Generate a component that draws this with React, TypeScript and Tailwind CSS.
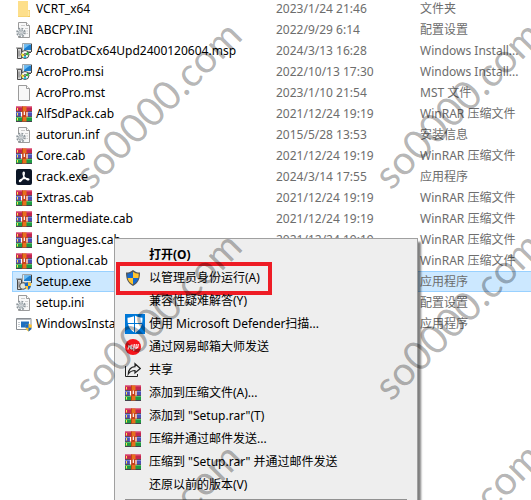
import type { ReactNode } from "react";

type IconKind = "folder" | "gear" | "msi" | "page" | "rar" | "acrobat" | "setup" | "installer";

type FileRow = { icon: IconKind; name: string; date: string; type: string; selected?: boolean };

const files: FileRow[] = [
  { icon: "folder", name: "VCRT_x64", date: "2023/1/24 21:46", type: "文件夹" },
  { icon: "gear", name: "ABCPY.INI", date: "2022/9/29 6:14", type: "配置设置" },
  { icon: "msi", name: "AcrobatDCx64Upd2400120604.msp", date: "2024/3/13 16:28", type: "Windows Install..." },
  { icon: "msi", name: "AcroPro.msi", date: "2022/10/13 17:30", type: "Windows Install..." },
  { icon: "page", name: "AcroPro.mst", date: "2023/1/10 21:54", type: "MST 文件" },
  { icon: "rar", name: "AlfSdPack.cab", date: "2021/12/24 19:19", type: "WinRAR 压缩文件" },
  { icon: "gear", name: "autorun.inf", date: "2015/5/28 13:53", type: "安装信息" },
  { icon: "rar", name: "Core.cab", date: "2021/12/24 19:19", type: "WinRAR 压缩文件" },
  { icon: "acrobat", name: "crack.exe", date: "2024/3/14 17:55", type: "应用程序" },
  { icon: "rar", name: "Extras.cab", date: "2021/12/24 19:19", type: "WinRAR 压缩文件" },
  { icon: "rar", name: "Intermediate.cab", date: "2021/12/24 19:19", type: "WinRAR 压缩文件" },
  { icon: "rar", name: "Languages.cab", date: "2021/12/24 19:19", type: "WinRAR 压缩文件" },
  { icon: "rar", name: "Optional.cab", date: "2021/12/24 19:19", type: "WinRAR 压缩文件" },
  { icon: "setup", name: "Setup.exe", date: "", type: "应用程序", selected: true },
  { icon: "gear", name: "setup.ini", date: "", type: "配置设置" },
  { icon: "installer", name: "WindowsInsta", date: "", type: "应用程序" },
];

function RarIcon() {
  return (
    <svg viewBox="0 0 16 16" className="size-4 shrink-0" aria-hidden="true">
      <path d="M0 .5h16v4.500H0z" fill="#c4264f" />
      <path d="M0 .5h16v1H0z" fill="#e2587e" />
      <path d="M0 6h16v4H0z" fill="#4b50b4" />
      <path d="M0 6h16v1H0z" fill="#7b80d8" />
      <path d="M0 11h16v4.500H0z" fill="#1f9a42" />
      <path d="M0 11h16v1H0z" fill="#4fc070" />
      <path d="M0 5.500h16M0 10.500h16M0 15.500h16" stroke="#33223a" strokeWidth=".8" />
      <path d="M1.500 2v2.500M1.500 7v2.500M1.500 12v2.500" stroke="#ffe14d" />
      <path d="M6 .5h4.500v15H6z" fill="#e8701c" />
      <path d="M6 .5h1v15H6z" fill="#b84a14" />
      <path d="M5 5h7v6H5z" fill="#c6431c" />
      <path d="M5.500 10.500V6M11 10.500V6M8.300 5.500v3.500" stroke="#fff" strokeWidth="1.200" />
    </svg>
  );
}

function AdminShieldIcon() {
  return (
    <svg viewBox="0 0 16 16" className="size-4 shrink-0" aria-hidden="true">
      <path d="M8 0C6 1.700 4 2.500 1 2.600 1 9 2.500 13 8 16c5.500-3 7-7 7-13.400C12 2.500 10 1.700 8 0Z" fill="#555" />
      <path d="M8 1.800C6.500 3 4.800 3.600 2.300 3.800c0 1.600.1 2.900.3 4.200H8Z" fill="#1468cc" />
      <path d="M8 1.800c1.500 1.200 3.200 1.800 5.700 2 0 1.600-.1 2.900-.3 4.200H8Z" fill="#ffc42e" />
      <path d="M2.600 8c.6 3 2.200 4.900 5.400 6.600V8Z" fill="#ffc42e" />
      <path d="M13.400 8c-.6 3-2.200 4.900-5.400 6.600V8Z" fill="#1468cc" />
    </svg>
  );
}

function PageShape() {
  return (
    <>
      <path d="M2.500.5h8l3 3v12h-11z" fill="#f8f8f8" stroke="#9b9b9b" />
      <path d="M10.500.5v3h3" fill="#fff" stroke="#9b9b9b" />
    </>
  );
}

function ComputerShape() {
  return (
    <>
      <path d="M1.500 5.500h4v10h-4z" fill="#d6d6d6" stroke="#4a4a4a" />
      <path d="M0 5h6" stroke="#777" />
      <path d="M3 7.500v6" stroke="#777" />
      <path d="M6.500.5h9v8h-9z" fill="#e4e8ea" stroke="#9aa4aa" />
      <path d="M8 1.500h7v5.500H8z" fill="#1d7fd0" />
      <path d="M8 1.500h6L8 6z" fill="#6cbcf2" />
      <path d="M15.500 1v8M7 9.500h8" stroke="#444" />
    </>
  );
}

function FileIcon({ kind }: { kind: IconKind }) {
  if (kind === "rar") return <RarIcon />;
  return (
    <svg viewBox="0 0 16 16" className="size-4 shrink-0" aria-hidden="true">
      {kind === "folder" && (
        <>
          <path d="M2 0h9.500v9H14v7H2z" fill="#f0c95d" />
          <path d="M2 0h10v15.500H2z" fill="#fddf8b" />
          <path d="M12 9.500h1.500V15H12z" fill="#ffe9a8" />
        </>
      )}
      {kind === "page" && <PageShape />}
      {kind === "gear" && (
        <>
          <PageShape />
          <path d="M5 3.500h4M9 6.500h3M10.500 9h1.500M10.500 11.500h1.500" stroke="#cdcdcd" />
          <circle cx="5" cy="10.500" r="4" fill="#fff" stroke="#8b949a" strokeWidth="1.600" strokeDasharray="1.800 1.340" />
          <circle cx="5" cy="10.500" r="2.600" fill="#dde2e4" stroke="#9ba4aa" />
          <circle cx="5" cy="10.500" r="1" fill="#fff" stroke="#8b949a" strokeWidth=".6" />
        </>
      )}
      {kind === "msi" && (
        <>
          <ComputerShape />
          <circle cx="9" cy="11.500" r="4" fill="#f4f6f4" stroke="#3a3a3a" strokeWidth=".9" />
          <path d="m9 11.500 2.600-2.800a3.600 3.600 0 0 1 1 3.800z" fill="#37c13c" />
          <path d="m9 11.500-3.400-1.300a3.600 3.600 0 0 0 .9 3.800z" fill="#f3e21f" />
          <path d="m9 11.500 1.600 3.300a3.600 3.600 0 0 1-3.200 0z" fill="#25b6cf" />
          <circle cx="9" cy="11.500" r="1" fill="#fff" stroke="#222" strokeWidth=".8" />
        </>
      )}
      {kind === "setup" && (
        <>
          <ComputerShape />
          <circle cx="7" cy="12" r="3.300" fill="#dfe6df" stroke="#444" strokeWidth=".9" />
          <path d="M12 8c-1 .8-2 1.100-3.300 1.200 0 3 .8 5.200 3.300 6.600 2.500-1.400 3.300-3.600 3.300-6.600C14 9.100 13 8.800 12 8z" fill="#ffc42e" />
          <path d="M12 8c-1 .8-2 1.100-3.300 1.200 0 1 .1 1.900.3 2.700h3zM12 11.900h3c-.5 1.800-1.400 3-3 3.900z" fill="#1468cc" />
        </>
      )}
      {kind === "acrobat" && (
        <>
          <rect width="16" height="16" rx="2" fill="#0b1526" />
          <path
            d="M7.800 3.200c-1.300 0-.8 2.800.4 4.700 1.300 2.300 3.900 3.600 4.600 2.700.7-1-2.700-1.500-5.200-.9-2.300.5-4.600 1.600-4.200 2.600.6 1.200 2.800-1.300 3.900-3.900.9-2.200 1.600-5.200.5-5.200z"
            fill="none"
            stroke="#fff"
            strokeWidth="1.200"
          />
        </>
      )}
      {kind === "installer" && (
        <>
          <path d="M.5 2.500h14.500v11H.5z" fill="#fff" stroke="#8a8f94" />
          <path d="M1 3.500h13.500" stroke="#b5babf" />
          <path d="M5 5.500h8v6H5z" fill="#1f6fc0" />
          <path d="M2 6.500h2M2 8.500h2M2 10.500h2" stroke="#c5cbd0" />
          <path d="M12.500 7.500c-1 .8-2 1.200-3.300 1.300 0 3.200.7 5.200 3.300 6.700 2.600-1.500 3.300-3.500 3.300-6.700-1.300-.1-2.300-.5-3.300-1.300z" fill="#ffc42e" />
          <path d="M12.500 7.500c-1 .8-2 1.200-3.300 1.300 0 1.100.1 2 .3 2.900h3zM12.500 11.700h3c-.5 1.700-1.400 2.900-3 3.800z" fill="#1468cc" />
        </>
      )}
    </svg>
  );
}

function DefenderIcon() {
  return (
    <svg viewBox="0 0 20 20" className="size-5 shrink-0" aria-hidden="true">
      <path d="M0 0h20v20H0z" fill="#0078d7" />
      <path d="M10 1.500C7.800 3 5.300 3.600 2.500 3.700c-.1 7.300 1.500 11.600 7.500 15 6-3.400 7.600-7.700 7.500-15-2.800-.1-5.300-.7-7.500-2.200z" fill="#fff" />
      <path d="M9.500 1v18M2 9.500h16" stroke="#0078d7" />
    </svg>
  );
}

function NeteaseIcon() {
  return (
    <svg viewBox="0 0 16 16" className="size-4 shrink-0" aria-hidden="true">
      <circle cx="8" cy="8" r="8" fill="#f5161c" />
      <path
        d="M3 10.500 4 6M3.500 8.500 5.500 7v3M7 5.500l-.5 4.500 2-.5L9.300 5M9.300 5l-.6 7M11.300 5l-.5 4.500 2-1L13.300 5"
        fill="none"
        stroke="#fff"
        strokeWidth="1.100"
      />
    </svg>
  );
}

function ShareIcon() {
  return (
    <svg viewBox="0 0 16 16" className="size-4 shrink-0" aria-hidden="true">
      <path d="M.5 4v10.500h12V12" fill="none" stroke="#222" />
      <path d="M10 1.700 15.300 6.500 10 11V8.500C7 8.500 5 9.500 3.300 12 3.600 7.500 6 5 10 4.700z" fill="none" stroke="#222" strokeWidth="1.200" />
    </svg>
  );
}

type MenuEntry = { label: string; icon?: ReactNode; bold?: boolean; marked?: boolean };

const menu: MenuEntry[] = [
  { label: "打开(O)", bold: true },
  { label: "以管理员身份运行(A)", icon: <AdminShieldIcon />, marked: true },
  { label: "兼容性疑难解答(Y)" },
  { label: "使用 Microsoft Defender扫描...", icon: <DefenderIcon /> },
  { label: "通过网易邮箱大师发送", icon: <NeteaseIcon /> },
  { label: "共享", icon: <ShareIcon /> },
  { label: "添加到压缩文件(A)...", icon: <RarIcon /> },
  { label: '添加到 "Setup.rar"(T)', icon: <RarIcon /> },
  { label: "压缩并通过邮件发送...", icon: <RarIcon /> },
  { label: '压缩到 "Setup.rar" 并通过邮件发送', icon: <RarIcon /> },
  { label: "还原以前的版本(V)" },
];

function ContextMenu() {
  return (
    <div
      role="menu"
      className="absolute top-[238px] left-[114px] w-[304px] border border-[#a0a0a0] bg-[#eeeeee] px-[10px] pt-1 pb-4 shadow-[3px_4px_2px_rgba(0,0,0,0.5)]"
    >
      {menu.map((entry) => (
        <button
          key={entry.label}
          type="button"
          role="menuitem"
          className="relative flex h-[23px] w-full items-center text-left text-xs whitespace-pre text-black"
        >
          <span className="flex w-6 shrink-0 items-center">{entry.icon}</span>
          <span className={entry.bold ? "font-bold" : ""}>{entry.label}</span>
          {entry.marked && <span className="absolute -top-1 -left-[9px] h-[33px] w-[156px] border-4 border-[#ee1c25]" />}
        </button>
      ))}
      <hr className="mt-[3px] border-[#919191]" />
    </div>
  );
}

const marks = [
  "top-[81px] left-[43px]",
  "top-[81px] left-[343px]",
  "top-[292px] left-[43px]",
  "top-[292px] left-[343px]",
  "top-[503px] left-[43px]",
  "top-[503px] left-[343px]",
];

export default function App() {
  return (
    <main className="relative h-screen overflow-hidden bg-white font-['Noto_Sans','Noto_Sans_CJK_SC',sans-serif] text-xs">
      <table className="-mt-0.5 w-full table-fixed border-collapse">
        <colgroup>
          <col className="w-[12px]" />
          <col className="w-[264px]" />
          <col className="w-[144px]" />
          <col />
        </colgroup>
        <tbody>
          {files.map((file) => (
            <tr key={file.name} className="h-[21px] whitespace-nowrap text-[#6d6d6d]">
              <td className="p-0" />
              <td className={file.selected ? "bg-[#cce8ff] p-0 shadow-[inset_1px_1px_#99d1ff,inset_0_-1px_#99d1ff]" : "p-0"}>
                <div className="flex h-[21px] items-center gap-1 pl-1 text-black">
                  <FileIcon kind={file.icon} />
                  <span>{file.name}</span>
                </div>
              </td>
              <td className={file.selected ? "bg-[#cce8ff] p-0 shadow-[inset_0_1px_#99d1ff,inset_0_-1px_#99d1ff]" : "p-0"}>
                <div className="h-[21px] leading-[21px]">{file.date}</div>
              </td>
              <td className={file.selected ? "bg-[#cce8ff] p-0 shadow-[inset_0_1px_#99d1ff,inset_0_-1px_#99d1ff]" : "p-0"}>
                <div className="h-[21px] leading-[21px]">{file.type}</div>
              </td>
            </tr>
          ))}
        </tbody>
      </table>
      <ContextMenu />
      {marks.map((place) => (
        <span
          key={place}
          className={`pointer-events-none absolute w-[228px] -rotate-45 text-center font-['Lato',sans-serif] text-[40px] leading-[46px] text-black/30 ${place}`}
        >
          so0000.com
        </span>
      ))}
    </main>
  );
}
